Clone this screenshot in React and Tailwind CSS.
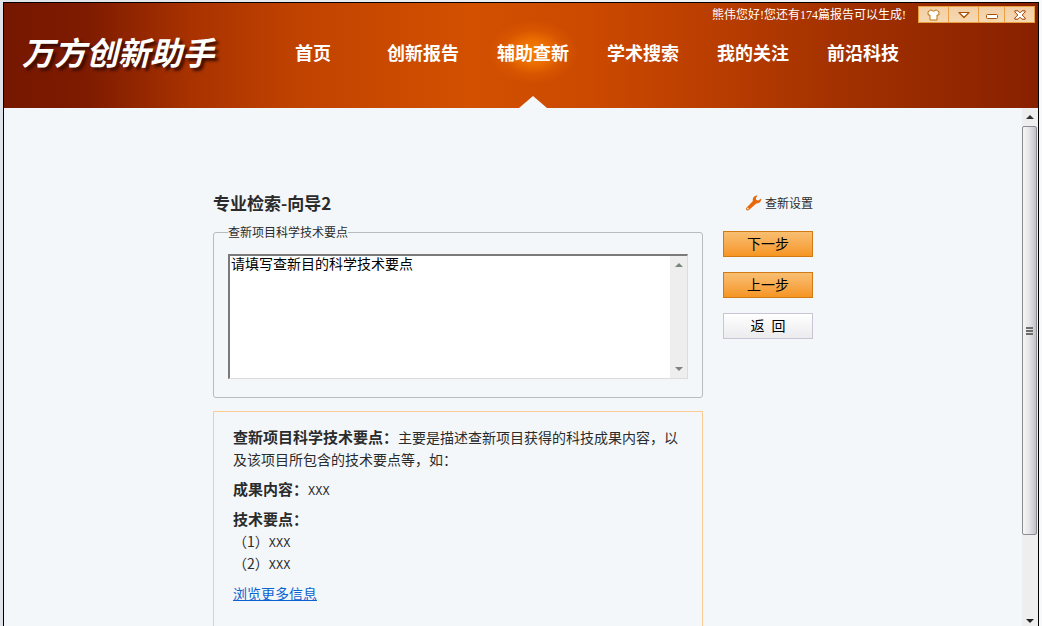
import React, { useState } from "react"

const NAV = ["首页", "创新报告", "辅助查新", "学术搜索", "我的关注", "前沿科技"]

function WindowButton({ label, className, children }) {
  return (
    <button
      type="button"
      aria-label={label}
      className={`flex h-[17px] items-center justify-center border-y border-r border-[#e8a040] bg-linear-to-b from-[#f3cfa6] to-[#f6d8b0] ${className}`}
    >
      {children}
    </button>
  )
}

function WindowControls() {
  return (
    <div className="flex border-l border-[#e8a040]">
      <WindowButton label="换肤" className="w-[30px]">
        <svg width="13" height="12" viewBox="0 0 13 12">
          <path d="M4 .8 L1 2.8 L1.2 6 L3 6 V11 H10 V6 L11.8 6 L12 2.8 L9 .8 C8 2.4 5 2.4 4 .8 Z" fill="#fff" stroke="#b87414" />
        </svg>
      </WindowButton>
      <WindowButton label="菜单" className="w-[30px]">
        <svg width="12" height="8" viewBox="0 0 12 8">
          <path d="M1 1.5 H11 L6 6.5 Z" fill="#fff" stroke="#a85000" strokeWidth="1.2" strokeLinejoin="round" />
        </svg>
      </WindowButton>
      <WindowButton label="最小化" className="w-[26px]">
        <svg width="12" height="12" viewBox="0 0 12 12">
          <rect x=".5" y="5.5" width="11" height="4" rx="1" fill="#fff" stroke="#a85000" />
        </svg>
      </WindowButton>
      <WindowButton label="关闭" className="w-[30px]">
        <svg width="12" height="10" viewBox="0 0 12 10">
          <path d="M.8 .8 H4 L6 2.8 L8 .8 H11.2 V2 L8.2 5 L11.2 8 V9.2 H8 L6 7.2 L4 9.2 H.8 V8 L3.8 5 L.8 2 Z" fill="#fff" stroke="#a04000" />
        </svg>
      </WindowButton>
    </div>
  )
}

function Header({ active, onSelect }) {
  return (
    <header className="relative flex h-[105px] shrink-0 bg-[linear-gradient(90deg,#761700_0%,#7e1b00_8%,#a83200_18%,#c04200_28%,#d25000_45%,#cc4a00_56%,#be4000_66%,#a43200_80%,#882000_100%)]">
      <h1 className="w-[254px] shrink-0 pl-[18px] pt-[26px] text-[32px] leading-[44px] font-bold italic whitespace-nowrap text-white [text-shadow:3px_3px_3px_#3a0c00]">
        万方创新助手
      </h1>
      <nav className="flex">
        {NAV.map((item) => (
          <a
            key={item}
            href="#"
            aria-current={item === active ? "page" : undefined}
            onClick={(e) => {
              e.preventDefault()
              onSelect(item)
            }}
            className={`relative flex w-[110px] justify-center pt-[35px] text-lg font-bold text-white ${
              item === active
                ? "bg-[radial-gradient(ellipse_45px_32px_at_50%_49px,#f58200_0%,#ea6c00_40%,#dc5800b0_70%,transparent_100%)]"
                : ""
            }`}
          >
            {item}
            {item === active && (
              <svg className="absolute bottom-0 left-1/2 -translate-x-1/2" width="28" height="12" viewBox="0 0 28 12">
                <path d="M0 12 L14 0 L28 12 Z" fill="#f4f8fb" />
              </svg>
            )}
          </a>
        ))}
      </nav>
      <div className="absolute right-[3px] top-[3px] flex items-center gap-3">
        <p className="text-xs text-white font-['Liberation_Serif','Noto_Sans_CJK_SC',serif]">
          熊伟您好!您还有174篇报告可以生成!
        </p>
        <WindowControls />
      </div>
    </header>
  )
}

function Arrow({ down, color }) {
  return (
    <svg width="8" height="4" viewBox="0 0 8 4" className="shrink-0">
      <path d={down ? "M0 0 H8 L4 4 Z" : "M0 4 H8 L4 0 Z"} fill={color} />
    </svg>
  )
}

function PageScrollbar() {
  return (
    <div className="flex w-4 shrink-0 flex-col bg-[#eeeeee]">
      <div className="flex h-[18px] shrink-0 items-center justify-center">
        <Arrow color="#333" />
      </div>
      <div className="mr-px flex h-[79%] items-center justify-center rounded-xs border border-[#8c8c90] bg-linear-to-r from-[#f6f6f6] via-[#e4e4e6] to-[#c0c0c8]">
        <div className="flex w-[7px] flex-col gap-px">
          <span className="h-0.5 bg-[#6c6c6c]" />
          <span className="h-0.5 bg-[#6c6c6c]" />
          <span className="h-0.5 bg-[#6c6c6c]" />
        </div>
      </div>
      <div className="flex grow items-end justify-center pb-[3px]">
        <Arrow down color="#222" />
      </div>
    </div>
  )
}

function PointsField() {
  const [text, setText] = useState("请填写查新目的科学技术要点")

  return (
    <fieldset className="rounded-[3px] border border-[#b9bcbe] px-3.5 pb-[18px]">
      <legend className="text-xs">
        <label htmlFor="points">查新项目科学技术要点</label>
      </legend>
      <div className="mt-3.5 flex h-[125px] border border-t-2 border-l-2 border-[#dcdcdc] border-t-[#7a7a7a] border-l-[#7a7a7a] bg-white">
        <textarea
          id="points"
          value={text}
          onChange={(e) => setText(e.target.value)}
          className="min-w-0 flex-1 resize-none overflow-hidden px-px text-sm leading-3.5 text-black outline-none"
        />
        <div className="flex w-[17px] flex-col items-center justify-between bg-[#eeeeee] py-[7px]">
          <Arrow color="#7c857c" />
          <Arrow down color="#7c857c" />
        </div>
      </div>
    </fieldset>
  )
}

function Xxx() {
  return <span className="text-xs font-['Liberation_Mono',monospace]">XXX</span>
}

function Tips() {
  return (
    <section className="mt-[13px] space-y-2 border border-[#fbcb94] px-[19px] pt-3.5 pb-16 text-sm leading-[22px]">
      <p>
        <strong className="text-[15px]">查新项目科学技术要点：</strong>
        主要是描述查新项目获得的科技成果内容，以及该项目所包含的技术要点等，如：
      </p>
      <p>
        <strong className="text-[15px]">成果内容：</strong>
        <Xxx />
      </p>
      <div>
        <strong className="block text-[15px]">技术要点：</strong>
        <p>（1）<Xxx /></p>
        <p>（2）<Xxx /></p>
      </div>
      <a href="#" className="inline-block text-[#0a63d0] underline">浏览更多信息</a>
    </section>
  )
}

function StepButton({ primary, children }) {
  return (
    <button
      type="button"
      className={`h-[26px] w-full cursor-pointer border pb-0.5 text-sm text-black ${
        primary
          ? "border-[#d27a14] bg-linear-to-b from-[#f8bf70] to-[#f6951f]"
          : "border-[#c8c6d4] bg-linear-to-b from-white to-[#ebebee]"
      }`}
    >
      {children}
    </button>
  )
}

export default function App() {
  const [active, setActive] = useState("辅助查新")

  return (
    <div className="flex h-screen flex-col overflow-hidden bg-linear-to-r from-[#dfe4ea] to-[#f8f9fa] px-[3px] pt-0.5 text-[#2b2b2b] font-['Noto_Sans_CJK_SC',sans-serif]">
      <div className="flex min-h-0 flex-1 flex-col border-x border-t border-black bg-[#f3f7fa]">
        <Header active={active} onSelect={setActive} />
        <div className="flex min-h-0 flex-1">
          <main className="min-w-0 flex-1 overflow-hidden">
            <div className="mx-auto w-[600px] pt-[83px]">
              <div className="flex h-[33px] items-start justify-between">
                <h2 className="text-[17px] leading-6 font-bold">专业检索-向导2</h2>
                <a href="#" className="flex items-center gap-[3px] text-xs leading-6">
                  <svg width="17" height="16" viewBox="0 0 16 16">
                    <path
                      d="M12.2 .4 L10.4 3 L10.8 5 L12.8 5.6 L15.6 3.4 C16.2 6.4 14 8.8 10.8 8.4 L3.4 15 C1.6 16.4 -.4 14.4 1 12.8 L7.4 6 C6.6 2.8 8.8 .2 12.2 .4 Z"
                      fill="#e8690b"
                    />
                    <circle cx="2.4" cy="13.6" r=".8" fill="#fff" />
                  </svg>
                  查新设置
                </a>
              </div>
              <div className="flex items-start gap-5">
                <div className="min-w-0 flex-1">
                  <PointsField />
                  <Tips />
                </div>
                <div className="flex w-[90px] flex-col gap-[15px] pt-[7px]">
                  <StepButton primary>下一步</StepButton>
                  <StepButton primary>上一步</StepButton>
                  <StepButton>返&ensp;回</StepButton>
                </div>
              </div>
            </div>
          </main>
          <PageScrollbar />
        </div>
      </div>
    </div>
  )
}
